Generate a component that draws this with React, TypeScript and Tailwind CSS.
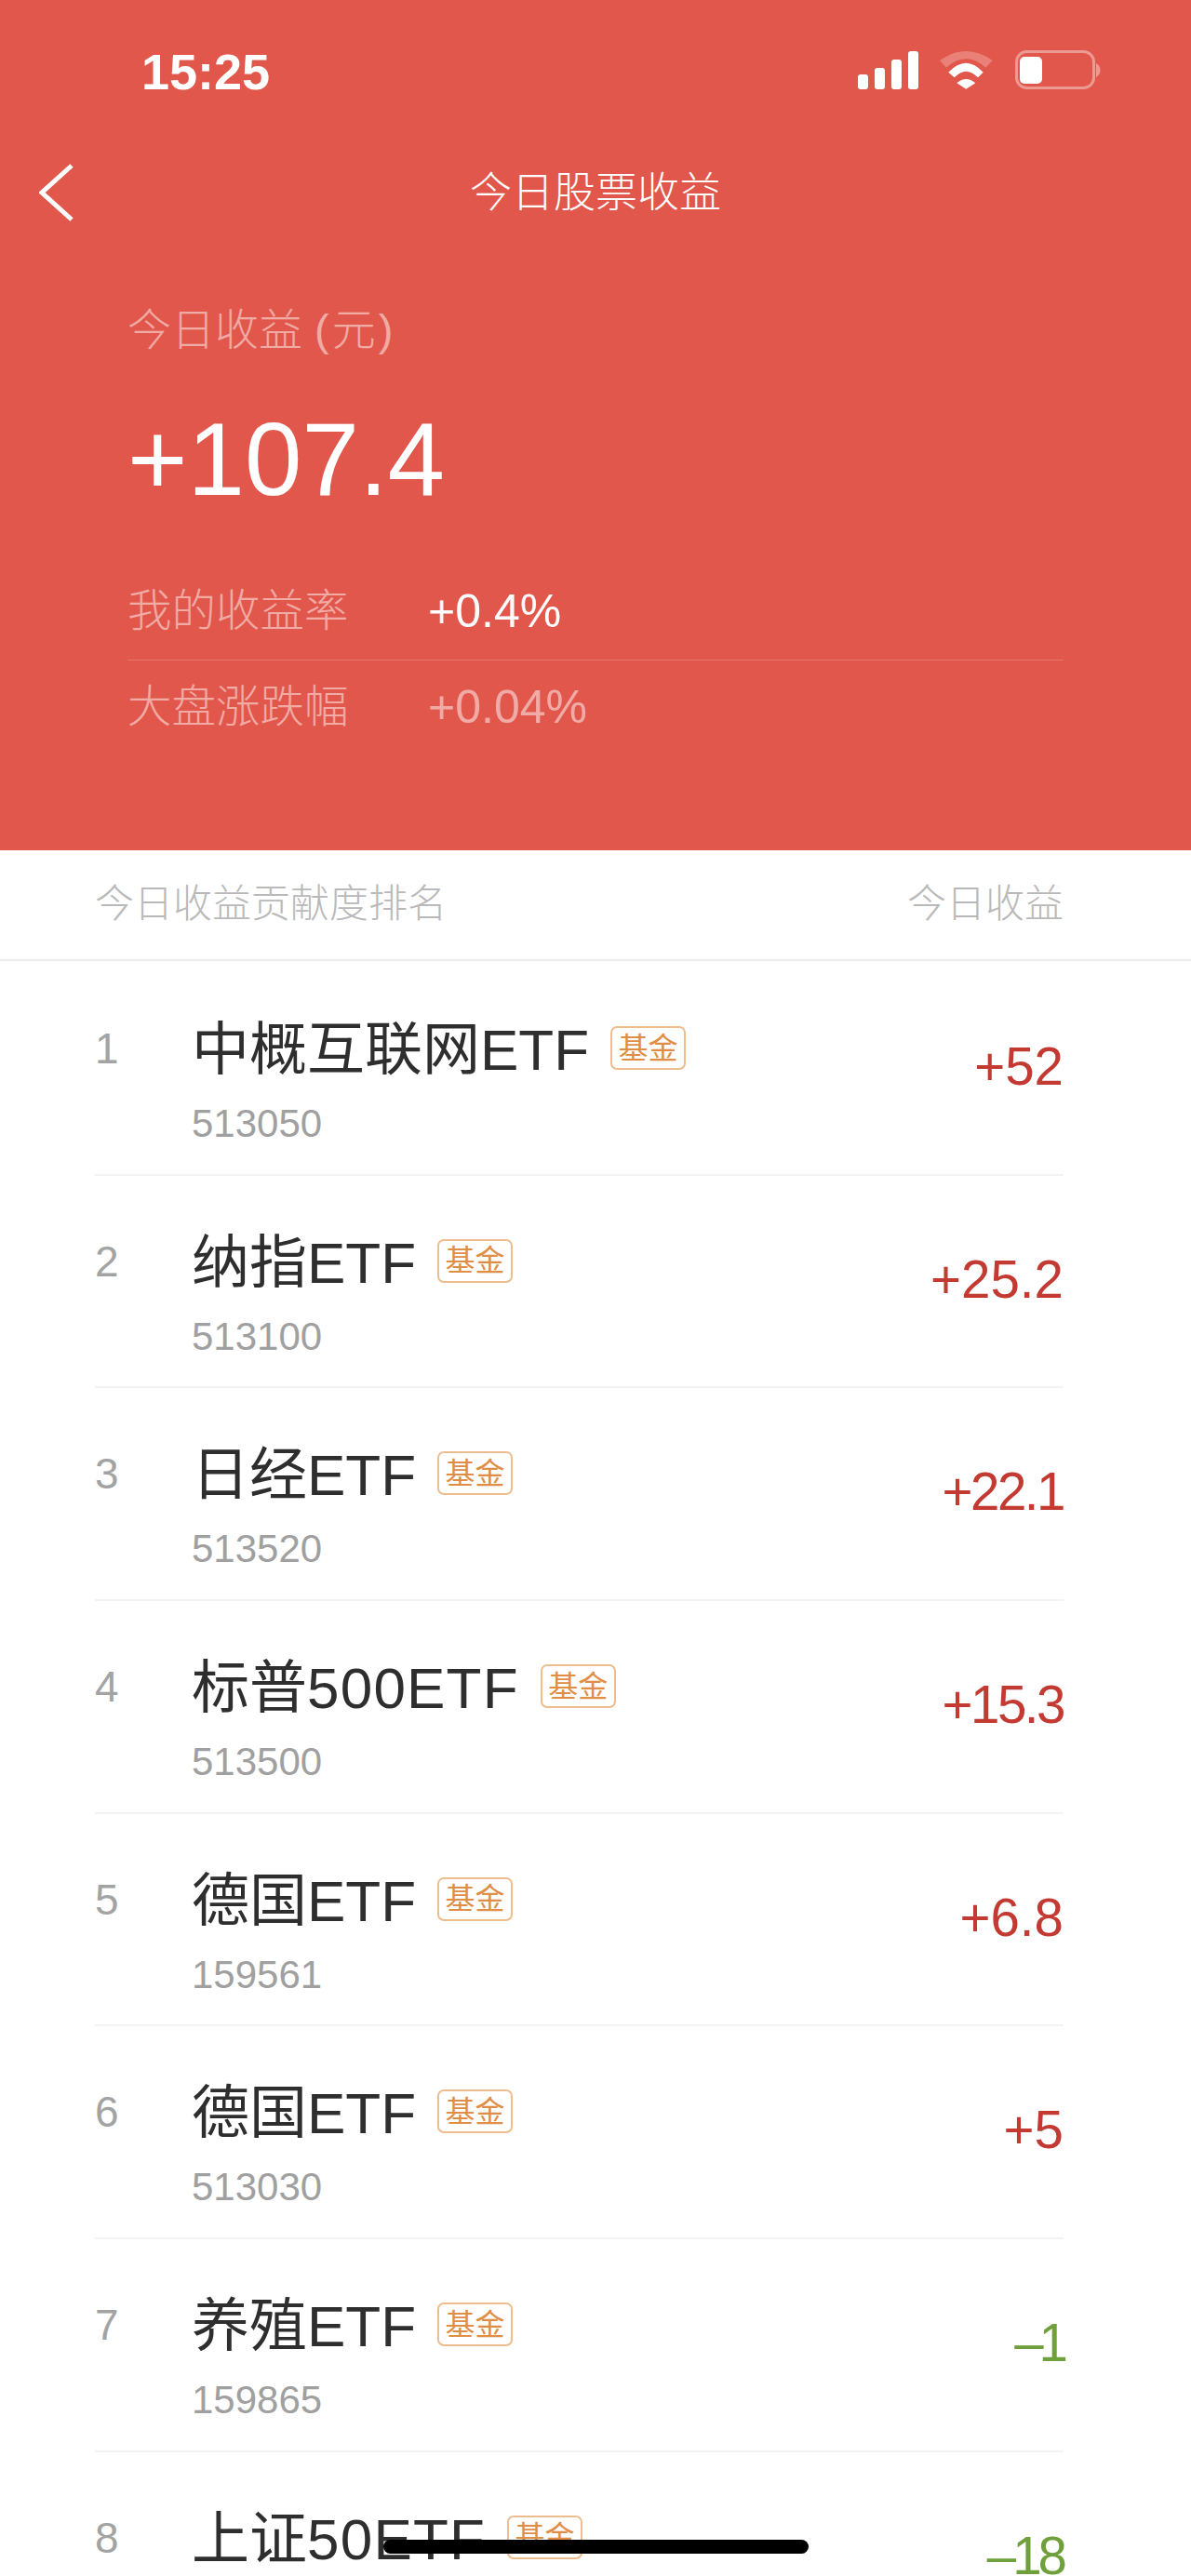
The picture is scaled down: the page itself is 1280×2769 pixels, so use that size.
const FONT = "font-['Liberation_Sans','Noto_Sans_CJK_SC',sans-serif]";

type Row = {
  rank: number;
  cjk: string;
  latin: string;
  code?: string;
  value: string;
  valueClass?: string;
  down?: boolean;
};

const rows: Row[] = [
  { rank: 1, cjk: "中概互联网", latin: "ETF", code: "513050", value: "+52" },
  { rank: 2, cjk: "纳指", latin: "ETF", code: "513100", value: "+25.2" },
  { rank: 3, cjk: "日经", latin: "ETF", code: "513520", value: "+22.1", valueClass: "tracking-[-2.5px]" },
  { rank: 4, cjk: "标普", latin: "500ETF", code: "513500", value: "+15.3", valueClass: "tracking-[-2.5px]" },
  { rank: 5, cjk: "德国", latin: "ETF", code: "159561", value: "+6.8" },
  { rank: 6, cjk: "德国", latin: "ETF", code: "513030", value: "+5" },
  { rank: 7, cjk: "养殖", latin: "ETF", code: "159865", value: "–1", down: true, valueClass: "tracking-[-5px]" },
  { rank: 8, cjk: "上证", latin: "50ETF", value: "–18", down: true, valueClass: "tracking-[-4px]" },
];

function StatusIcons() {
  return (
    <svg width="262" height="44" viewBox="0 0 262 44" fill="none" className="mt-[4px] shrink-0">
      <rect x="0" y="26" width="11" height="16" rx="3" fill="#fff" />
      <rect x="18" y="19" width="11" height="23" rx="3" fill="#fff" />
      <rect x="36" y="10" width="11" height="32" rx="3" fill="#fff" />
      <rect x="54" y="1" width="11" height="41" rx="3" fill="#fff" />
      <path d="M88 11 Q116.3 -9 144.7 11 L137.3 18.7 Q116.3 0 95 18.7 Z" fill="#fff" fillOpacity="0.25" />
      <path d="M97.3 23.7 Q116.3 3.7 134.7 23.7 L129 29.3 Q116.3 16 103.7 29.3 Z" fill="#fff" />
      <path d="M106.3 35.3 Q116.3 26.7 126.3 35.3 L116.3 41.7 Z" fill="#fff" />
      <rect x="170.5" y="1.5" width="83" height="39" rx="11" stroke="#fff" strokeOpacity="0.4" strokeWidth="3" />
      <rect x="174" y="7" width="24" height="29" rx="5" fill="#fff" />
      <path d="M256 14 C262 17 262 26 256 29 Z" fill="#fff" fillOpacity="0.4" />
    </svg>
  );
}

function ListRow({ r }: { r: Row }) {
  return (
    <div className="flex h-[228.7px] ml-[102px] mr-[137px] border-b-2 border-[#f3f3f3]">
      <div className="w-[104px] shrink-0 pt-[52px] text-[46px] leading-[80px] text-[#a3a3a3]">{r.rank}</div>
      <div className="flex-1 pt-[54px]">
        <div className="flex items-center h-[80px] text-[62px] leading-[80px] text-[#2e2e2e]">
          <span>{r.cjk}</span>
          <span className={r.latin === "ETF" ? "" : "tracking-[1.2px]"}>{r.latin}</span>
          <span className="ml-[23px] flex items-center justify-center w-[81px] h-[47px] -mt-[5px] rounded-[7px] border-2 border-[#eebd8d] text-[32px] leading-none text-[#e08e46]">
            基金
          </span>
        </div>
        {r.code && <div className="mt-[14px] text-[42px] leading-[50px] text-[#a0a0a0]">{r.code}</div>}
      </div>
      <div
        className={`pt-[72px] text-[56.5px] leading-[80px] ${r.down ? "text-[#6fa03c]" : "text-[#c23a32]"} ${r.valueClass ?? ""}`}
      >
        {r.value}
      </div>
    </div>
  );
}

export default function App() {
  return (
    <div className={`relative h-[2769px] w-[1280px] overflow-hidden bg-white ${FONT}`}>
      <header className="h-[914px] bg-[#e2574c] text-white">
        <div className="flex h-[170px] items-start justify-between pt-[50px] pl-[152px] pr-[96px]">
          <span className="text-[54px] leading-[54px] font-bold">15:25</span>
          <StatusIcons />
        </div>
        <div className="relative flex h-[75px] items-center justify-center">
          <svg width="40" height="64" viewBox="0 0 40 64" fill="none" className="absolute left-[42px] top-[5px]">
            <path d="M35 3 L3 32 L35 61" stroke="#fff" strokeWidth="5" />
          </svg>
          <span className="text-[45px] leading-[60px] font-light">今日股票收益</span>
        </div>
        <div className="ml-[137px] mr-[137px] pt-[75px]">
          <div className="text-[47px] leading-[70px] font-light text-white/50">
            今日收益 <span className="tracking-[3px]">(元)</span>
          </div>
          <div className="mt-[44px] text-[110.5px] leading-[120px]">+107.4</div>
          <div className="mt-[53px] flex h-[103px] items-center border-b border-white/20 pb-[2px]">
            <span className="w-[323px] text-[47.5px] font-light text-white/50">我的收益率</span>
            <span className="text-[50px]">+0.4%</span>
          </div>
          <div className="flex h-[100px] items-center">
            <span className="w-[323px] text-[47.5px] font-light text-white/50">大盘涨跌幅</span>
            <span className="text-[50px] text-white/50">+0.04%</span>
          </div>
        </div>
      </header>
      <div className="flex h-[119px] items-center justify-between border-b-2 border-[#ececec] pb-[2px] pl-[102px] pr-[137px] text-[42px] font-light text-[#b9b9b9]">
        <span>今日收益贡献度排名</span>
        <span>今日收益</span>
      </div>
      <div className="pt-[2px]">
        {rows.map((r) => (
          <ListRow key={r.rank} r={r} />
        ))}
      </div>
      <div className="absolute left-[412px] top-[2730px] h-[15px] w-[457px] rounded-full bg-black" />
    </div>
  );
}
